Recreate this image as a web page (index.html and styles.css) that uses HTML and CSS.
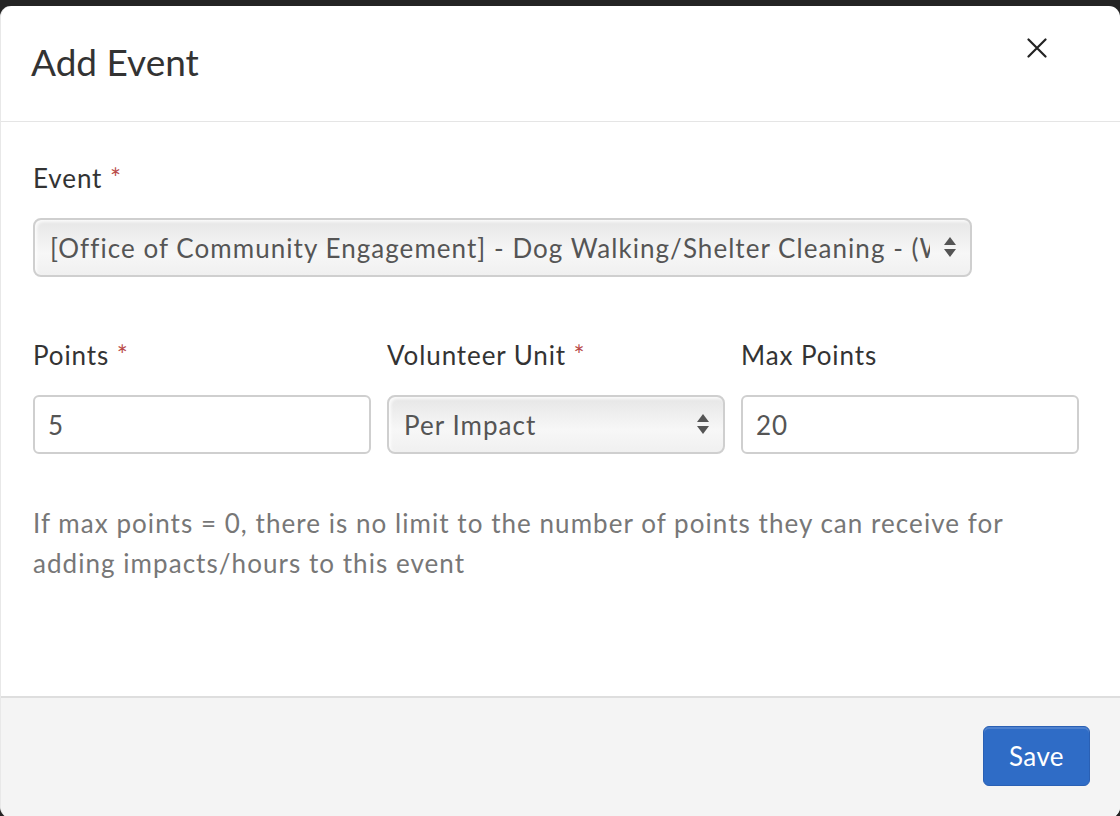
FILE: index.html
```html
<!DOCTYPE html>
<html lang="en">
<head>
    <meta charset="UTF-8">
    <meta name="viewport" content="width=device-width, initial-scale=1.0">
    <title>Add Event</title>
    <link rel="stylesheet" href="styles.css">
</head>
<body>
    <div class="modal">
        <div class="modal-header">
            <h2 class="modal-title">Add Event</h2>
            <button class="close" aria-label="Close">
                <svg width="20" height="20" viewBox="0 0 20 20"><path d="M1.5 1.5 L18.5 18.5 M18.5 1.5 L1.5 18.5" stroke="#222" stroke-width="2.2" stroke-linecap="round"/></svg>
            </button>
        </div>
        <div class="modal-body">
            <div class="form-group">
                <label class="label">Event <span class="req">*</span></label>
                <div class="select-wrap event-select">
                    <select class="select">
                        <option>[Office of Community Engagement] - Dog Walking/Shelter Cleaning - (Weekly)</option>
                    </select>
                    <svg class="arrows" width="14" height="22" viewBox="0 0 14 22"><path d="M7 1 L13 9 L1 9 Z M7 21 L13 13 L1 13 Z" fill="#555"/></svg>
                </div>
            </div>
            <div class="form-row">
                <div class="col">
                    <label class="label">Points <span class="req">*</span></label>
                    <input class="input" type="text" value="5">
                </div>
                <div class="col">
                    <label class="label">Volunteer Unit <span class="req">*</span></label>
                    <div class="select-wrap">
                        <select class="select">
                            <option>Per Impact</option>
                            <option>Per Hour</option>
                        </select>
                        <svg class="arrows" width="14" height="22" viewBox="0 0 14 22"><path d="M7 1 L13 9 L1 9 Z M7 21 L13 13 L1 13 Z" fill="#555"/></svg>
                    </div>
                </div>
                <div class="col">
                    <label class="label">Max Points</label>
                    <input class="input" type="text" value="20">
                </div>
            </div>
            <p class="help">If max points = 0, there is no limit to the number of points they can receive for adding impacts/hours to this event</p>
        </div>
        <div class="modal-footer">
            <button class="btn-save">Save</button>
        </div>
    </div>
</body>
</html>
```

FILE: styles.css
```css
body {
    margin: 0;
    background: #242424;
    font-family: Lato, "Open Sans", sans-serif;
    height: 816px;
    overflow: hidden;
}
.modal {
    margin-top: 6px;
    height: 812px;
    background: #fff;
    border-radius: 11px;
    display: flex;
    flex-direction: column;
    overflow: hidden;
    border-left: 1px solid #e8e8e8;
    box-sizing: border-box;
}
.modal-header {
    height: 116px;
    box-sizing: border-box;
    border-bottom: 1px solid #e5e5e5;
    display: flex;
    align-items: flex-start;
    justify-content: space-between;
    padding: 0 73px 0 30px;
}
.modal-title {
    margin: 35px 0 0;
    font-size: 37px;
    font-weight: 400;
    letter-spacing: 0;
    color: #333;
    line-height: 42px;
}
.close {
    margin-top: 32px;
    background: none;
    border: 0;
    padding: 0;
    width: 20px;
    height: 20px;
    cursor: pointer;
}
.modal-body {
    flex: 1;
    padding: 39px 41px 0 32px;
}
.label {
    display: block;
    font-size: 26px;
    letter-spacing: 0.9px;
    line-height: 34px;
    color: #333;
    margin-bottom: 23px;
}
.req {
    color: #b94a48;
}
.select-wrap {
    position: relative;
}
.event-select {
    width: 939px;
}
.select {
    -webkit-appearance: none;
    appearance: none;
    width: 100%;
    height: 59px;
    box-sizing: border-box;
    border: 2px solid #cfcfcf;
    border-radius: 8px;
    background: linear-gradient(#e6e6e6, #f7f7f7 60%, #f0f0f0);
    box-shadow: inset 2px 2px 3px rgba(255, 255, 255, 0.8);
    font-family: inherit;
    font-size: 26px;
    letter-spacing: 1.05px;
    color: #555;
    padding: 0 40px 0 15px;
    text-overflow: clip;
}
.arrows {
    position: absolute;
    right: 15px;
    top: 18px;
    pointer-events: none;
}
.form-row {
    display: grid;
    grid-template-columns: repeat(3, 1fr);
    gap: 16px;
    margin-top: 61px;
}
.input {
    width: 100%;
    height: 59px;
    box-sizing: border-box;
    border: 2px solid #cfcfcf;
    border-radius: 6px;
    font-family: inherit;
    font-size: 26px;
    letter-spacing: 0.9px;
    color: #555;
    padding: 0 13px;
}
.help {
    margin: 49px 0 0;
    font-size: 26px;
    letter-spacing: 1.05px;
    line-height: 40px;
    color: #777;
}
.modal-footer {
    height: 122px;
    box-sizing: border-box;
    border-top: 2px solid #dedede;
    background: #f4f4f4;
    display: flex;
    justify-content: flex-end;
    align-items: flex-start;
    padding: 28px 30px 0 0;
}
.btn-save {
    width: 107px;
    height: 60px;
    background: #2f6cc6;
    border: 1px solid #2a60b4;
    border-radius: 6px;
    color: #fff;
    font-family: inherit;
    font-size: 26px;
    letter-spacing: 0.4px;
    box-shadow: inset 0 2px 0 rgba(255, 255, 255, 0.15);
    cursor: pointer;
}
```
